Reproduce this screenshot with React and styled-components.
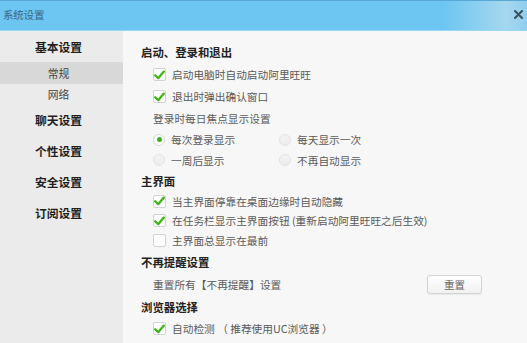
import React from "react";
import styled, { createGlobalStyle } from "styled-components";

const Global = createGlobalStyle`
  html, body { margin: 0; padding: 0; }
  body {
    width: 527px; height: 343px; overflow: hidden;
    font-family: "Noto Sans CJK SC", "Noto Sans", sans-serif;
    background: #f7f7f7;
  }
`;

const Window = styled.div`
  width: 527px;
  height: 343px;
  display: flex;
  flex-direction: column;
  overflow: hidden;
`;

const TitleBar = styled.div`
  height: 31px;
  flex: none;
  box-sizing: border-box;
  border-top: 1px solid #58a7d6;
  border-bottom: 1px solid #9bd6f3;
  background: linear-gradient(to right, #6cc6f1 0%, #6cc6f1 84%, #a6d7ef 96%, #8fcef0 100%);
  display: flex;
  align-items: center;
  justify-content: space-between;
  padding: 0 4px 2px 3px;
`;

const TitleText = styled.span`
  font-size: 10.5px;
  color: #386583;
  letter-spacing: -0.2px;
`;

const Body = styled.div`
  flex: 1;
  display: flex;
`;

const Sidebar = styled.div`
  width: 123px;
  flex: none;
  background: #ebebeb;
  display: flex;
  flex-direction: column;
`;

const NavGroup = styled.div`
  height: ${(p) => p.$h || 31}px;
  display: flex;
  align-items: center;
  justify-content: center;
  padding-right: 6px;
  font-size: 11.8px;
  font-weight: bold;
  color: #1f1f1f;
`;

const NavItem = styled.div`
  height: ${(p) => p.$h || 22}px;
  display: flex;
  align-items: center;
  justify-content: center;
  padding-right: 6px;
  font-size: 10.8px;
  color: #444;
  background: ${(p) => (p.$active ? "#d8d8d8" : "transparent")};
`;

const Content = styled.div`
  flex: 1;
  background: #f7f7f7;
  padding: 10px 0 0 18px;
  display: flex;
  flex-direction: column;
`;

const SectionTitle = styled.div`
  height: ${(p) => p.$h || 22}px;
  display: flex;
  align-items: center;
  font-size: 11.4px;
  font-weight: bold;
  color: #222;
`;

const Row = styled.div`
  height: ${(p) => p.$h || 20}px;
  display: flex;
  align-items: center;
  padding-left: 12px;
  font-size: 10.7px;
  color: #5a5a5a;
  white-space: nowrap;
`;

const Check = styled.label`
  display: flex;
  align-items: center;
  gap: 6px;
`;

const Box = styled.span`
  width: 13px;
  height: 13px;
  box-sizing: border-box;
  border: 1px solid #d2d2d2;
  border-radius: 2px;
  background: #fff;
  display: flex;
  align-items: center;
  justify-content: center;
`;

const RadioCol = styled.label`
  width: 126px;
  display: flex;
  align-items: center;
  gap: 6px;
`;

const RadioDot = styled.span`
  width: 12px;
  height: 12px;
  box-sizing: border-box;
  border-radius: 50%;
  border: 1px solid ${(p) => (p.$on ? "#d6d6d6" : "#e2e2e2")};
  background: ${(p) => (p.$on ? "#fff" : "linear-gradient(#f4f4f4, #ececec)")};
  display: flex;
  align-items: center;
  justify-content: center;
  &::after {
    content: "";
    display: ${(p) => (p.$on ? "block" : "none")};
    width: 5px;
    height: 5px;
    border-radius: 50%;
    background: #35b51a;
  }
`;

const Spread = styled(Row)`
  justify-content: space-between;
  padding-right: 45px;
`;

const Button = styled.button`
  width: 55px;
  height: 19px;
  padding: 0;
  border: 1px solid #d3d3d3;
  border-radius: 3px;
  background: linear-gradient(#ffffff, #f1f1f1);
  box-shadow: 0 1px 1px rgba(0, 0, 0, 0.06);
  font-family: inherit;
  font-size: 10.5px;
  color: #666;
`;

const Tick = () => (
  <svg width="11" height="10" viewBox="0 0 11 10">
    <path d="M1.2 5.2 L4.2 8.2 L9.8 1.6" fill="none" stroke="#3cb515" strokeWidth="2.3" strokeLinejoin="round" strokeLinecap="round" />
  </svg>
);

const CheckItem = ({ checked, children, h }) => (
  <Row $h={h}>
    <Check>
      <Box>{checked && <Tick />}</Box>
      {children}
    </Check>
  </Row>
);

const Radio = ({ on, children }) => (
  <RadioCol>
    <RadioDot $on={on} />
    {children}
  </RadioCol>
);

const Close = () => (
  <svg width="9" height="9" viewBox="0 0 9 9">
    <path d="M1 1 L8 8 M8 1 L1 8" stroke="#3c4f5c" strokeWidth="2" strokeLinecap="round" />
  </svg>
);

export default function App() {
  return (
    <>
      <Global />
      <Window>
        <TitleBar>
          <TitleText>系统设置</TitleText>
          <Close />
        </TitleBar>
        <Body>
          <Sidebar>
            <NavGroup>基本设置</NavGroup>
            <NavItem $active>常规</NavItem>
            <NavItem $h={20}>网络</NavItem>
            <NavGroup>聊天设置</NavGroup>
            <NavGroup>个性设置</NavGroup>
            <NavGroup>安全设置</NavGroup>
            <NavGroup>订阅设置</NavGroup>
          </Sidebar>
          <Content>
            <SectionTitle $h={22}>启动、登录和退出</SectionTitle>
            <CheckItem checked h={23}>启动电脑时自动启动阿里旺旺</CheckItem>
            <CheckItem checked h={21}>退出时弹出确认窗口</CheckItem>
            <Row $h={22}>登录时每日焦点显示设置</Row>
            <Row $h={21}>
              <Radio on>每次登录显示</Radio>
              <Radio>每天显示一次</Radio>
            </Row>
            <Row $h={20}>
              <Radio>一周后显示</Radio>
              <Radio>不再自动显示</Radio>
            </Row>
            <SectionTitle $h={21}>主界面</SectionTitle>
            <CheckItem checked h={20}>当主界面停靠在桌面边缘时自动隐藏</CheckItem>
            <CheckItem checked h={19}>在任务栏显示主界面按钮 (重新启动阿里旺旺之后生效)</CheckItem>
            <CheckItem h={21}>主界面总显示在最前</CheckItem>
            <SectionTitle $h={22}>不再提醒设置</SectionTitle>
            <Spread $h={22}>
              <span>重置所有【不再提醒】设置</span>
              <Button>重置</Button>
            </Spread>
            <SectionTitle $h={23}>浏览器选择</SectionTitle>
            <CheckItem checked h={21}>自动检测 （ 推荐使用UC浏览器 ）</CheckItem>
          </Content>
        </Body>
      </Window>
    </>
  );
}
